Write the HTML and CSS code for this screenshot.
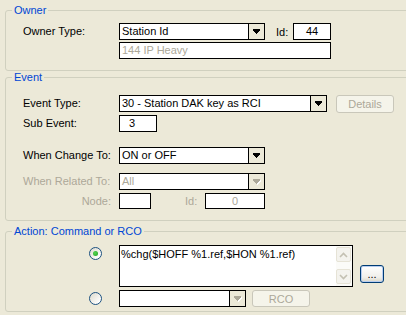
FILE: index.html
```html
<!DOCTYPE html>
<html lang="en">
<head>
    <meta charset="UTF-8">
    <title>Event Action</title>
    <link rel="stylesheet" href="styles.css">
</head>
<body>

<div class="window">
<div class="dialog">
    <fieldset class="group group-owner">
        <legend>Owner</legend>
        <div class="group-body owner-body">
            <div class="row">
                <span class="lbl">Owner Type:</span>
                <div class="combo w146">
                    <span class="combo-text">Station Id</span>
                    <span class="combo-btn"><svg width="7" height="5" viewBox="0 0 7 5" shape-rendering="crispEdges"><path d="M0 0h7v2h-1v1h-1v1h-1v1h-1v-1h-1v-1h-1v-1h-1z" fill="#000"/></svg></span>
                </div>
                <span class="side-lbl">Id:</span>
                <div class="field w38 center">44</div>
            </div>
            <div class="row gap2">
                <span class="lbl"></span>
                <div class="field w212 disabled">144 IP Heavy</div>
            </div>
        </div>
    </fieldset>

    <fieldset class="group group-event">
        <legend>Event</legend>
        <div class="group-body event-body">
            <div class="row">
                <span class="lbl">Event Type:</span>
                <div class="combo w208">
                    <span class="combo-text">30 - Station DAK key as RCI</span>
                    <span class="combo-btn"><svg width="7" height="5" viewBox="0 0 7 5" shape-rendering="crispEdges"><path d="M0 0h7v2h-1v1h-1v1h-1v1h-1v-1h-1v-1h-1v-1h-1z" fill="#000"/></svg></span>
                </div>
                <button class="btn btn-off details-btn">Details</button>
            </div>
            <div class="row gap3">
                <span class="lbl">Sub Event:</span>
                <div class="field w38 pad9">3</div>
            </div>
            <div class="row gap15">
                <span class="lbl">When Change To:</span>
                <div class="combo w146">
                    <span class="combo-text">ON or OFF</span>
                    <span class="combo-btn"><svg width="7" height="5" viewBox="0 0 7 5" shape-rendering="crispEdges"><path d="M0 0h7v2h-1v1h-1v1h-1v1h-1v-1h-1v-1h-1v-1h-1z" fill="#000"/></svg></span>
                </div>
            </div>
            <div class="row gap9">
                <span class="lbl off">When Related To:</span>
                <div class="combo w146">
                    <span class="combo-text off">All</span>
                    <span class="combo-btn"><svg width="8" height="6" viewBox="0 0 8 6" shape-rendering="crispEdges"><path d="M1 1h7v2h-1v1h-1v1h-1v1h-1v-1h-1v-1h-1v-1h-1z" fill="#fff"/><path d="M0 0h7v2h-1v1h-1v1h-1v1h-1v-1h-1v-1h-1v-1h-1z" fill="#ACA899"/></svg></span>
                </div>
            </div>
            <div class="row gap3 short">
                <span class="lbl off right">Node:</span>
                <div class="field w32"></div>
                <span class="side-lbl off node-id">Id:</span>
                <div class="field w60 center off">0</div>
            </div>
        </div>
    </fieldset>

    <fieldset class="group group-action">
        <legend>Action: Command or RCO</legend>
        <div class="group-body action-body">
            <div class="row tall">
                <span class="radio-cell top"><span class="radio checked"></span></span>
                <div class="memo">
                    <span class="memo-text">%chg($HOFF %1.ref,$HON %1.ref)</span>
                    <span class="memo-scroll">
                        <span class="sb-btn"><svg width="9" height="6" viewBox="0 0 9 6"><path d="M1 5l3.5-3.5 3.5 3.5" fill="none" stroke="#C4C1B3" stroke-width="1.6"/></svg></span>
                        <span class="sb-btn"><svg width="9" height="6" viewBox="0 0 9 6"><path d="M1 1l3.5 3.5 3.5-3.5" fill="none" stroke="#C4C1B3" stroke-width="1.6"/></svg></span>
                    </span>
                </div>
                <button class="btn btn-focus more-btn">...</button>
            </div>
            <div class="row gap3">
                <span class="radio-cell"><span class="radio"></span></span>
                <div class="combo w127">
                    <span class="combo-text"></span>
                    <span class="combo-btn"><svg width="8" height="6" viewBox="0 0 8 6" shape-rendering="crispEdges"><path d="M1 1h7v2h-1v1h-1v1h-1v1h-1v-1h-1v-1h-1v-1h-1z" fill="#fff"/><path d="M0 0h7v2h-1v1h-1v1h-1v1h-1v-1h-1v-1h-1v-1h-1z" fill="#ACA899"/></svg></span>
                </div>
                <button class="btn btn-off rco-btn">RCO</button>
            </div>
        </div>
    </fieldset>
</div>
</div>

</body>
</html>
```

FILE: styles.css
```css
body {
    margin: 0;
    background-color: #ECE9D8;
    font-family: "Liberation Sans", Arial, sans-serif;
    font-size: 11px;
    color: #000;
    overflow: hidden;
}
.window {
    width: 406px;
    height: 315px;
    overflow: hidden;
}
.dialog {
    padding-left: 5px;
    width: 440px;
}
.group {
    margin: 0;
    padding: 0;
    border: 1px solid #D0D0BF;
    border-radius: 3px;
    min-width: 0;
}
.group legend {
    margin-left: 6px;
    padding: 0 2px;
    line-height: 13px;
    color: #0046D5;
}
.group-owner {
    margin-top: 4px;
}
.group-action {
    margin-top: 4px;
}
.group-body {
    padding-left: 17px;
}
.owner-body {
    padding-top: 6px;
    padding-bottom: 11px;
}
.event-body {
    padding-top: 11px;
    padding-bottom: 11px;
}
.action-body {
    padding-top: 7px;
    padding-bottom: 4px;
}
.row {
    display: flex;
    align-items: center;
    height: 17px;
}
.row.short {
    height: 16px;
}
.row.tall {
    height: 42px;
    align-items: stretch;
}
.gap2 { margin-top: 2px; }
.gap3 { margin-top: 3px; }
.gap9 { margin-top: 9px; }
.gap15 { margin-top: 15px; }
.lbl {
    width: 96px;
    flex: none;
    line-height: 17px;
    white-space: nowrap;
}
.lbl.right {
    text-align: right;
    padding-right: 8px;
    box-sizing: border-box;
}
.off {
    color: #ACA899;
}
.side-lbl {
    width: 28px;
    flex: none;
    padding-left: 11px;
    box-sizing: border-box;
}
.side-lbl.node-id {
    width: 54px;
    padding-left: 34px;
}
.field {
    height: 100%;
    box-sizing: border-box;
    border: 1px solid #000;
    background-color: #fff;
    padding-left: 2px;
    line-height: 15px;
    flex: none;
}
.field.disabled {
    color: #ACA899;
}
.field.center {
    text-align: center;
    padding-left: 0;
}
.field.pad9 {
    padding-left: 9px;
}
.w32 { width: 32px; }
.w38 { width: 38px; }
.w60 { width: 60px; }
.w127 { width: 127px; }
.w146 { width: 146px; }
.w208 { width: 208px; }
.w212 { width: 212px; }
.combo {
    display: flex;
    height: 100%;
    box-sizing: border-box;
    border: 1px solid #000;
    background-color: #fff;
    flex: none;
}
.combo-text {
    flex: 1;
    padding-left: 2px;
    line-height: 15px;
    white-space: nowrap;
    overflow: hidden;
}
.combo-btn {
    width: 15px;
    border-left: 1px solid #000;
    background-color: #ECE9D8;
    display: flex;
    align-items: center;
    justify-content: center;
}
.btn {
    font-family: inherit;
    font-size: 11px;
    padding: 0;
    box-sizing: border-box;
    border-radius: 3px;
    flex: none;
}
.btn-off {
    border: 1px solid #C9C7BA;
    background-color: #F5F4EA;
    color: #ACA899;
}
.btn-focus {
    border: 1px solid #003C74;
    background: linear-gradient(#FFFFFF, #F0EFEA 70%, #D8D5C7);
    box-shadow: inset 0 0 0 1px #B8CDEF;
    color: #000;
}
.details-btn {
    width: 58px;
    height: 18px;
    margin-left: 9px;
}
.rco-btn {
    width: 58px;
    height: 17px;
    margin-left: 6px;
}
.more-btn {
    width: 24px;
    height: 18px;
    margin-left: 7px;
    align-self: flex-end;
    margin-bottom: 4px;
    line-height: 10px;
}
.radio-cell {
    width: 96px;
    flex: none;
    display: flex;
    align-items: center;
}
.radio-cell.top {
    align-items: flex-start;
    padding-top: 2px;
    box-sizing: border-box;
}
.radio {
    position: relative;
    width: 13px;
    height: 13px;
    margin-left: 66px;
    box-sizing: border-box;
    border: 1px solid #1C5180;
    border-radius: 50%;
    background: linear-gradient(135deg, #DCD9CB, #FFFFFF 85%);
}
.radio.checked::after {
    content: "";
    position: absolute;
    left: 3px;
    top: 3px;
    width: 5px;
    height: 5px;
    border-radius: 50%;
    background: radial-gradient(circle at 40% 40%, #55D451, #21A121);
}
.memo {
    width: 234px;
    box-sizing: border-box;
    border: 1px solid #000;
    background-color: #fff;
    display: flex;
    flex: none;
}
.memo-text {
    flex: 1;
    padding: 2px 1px;
    line-height: 13px;
    white-space: nowrap;
}
.memo-scroll {
    width: 16px;
    background-color: #FBFBF8;
    display: flex;
    flex-direction: column;
    justify-content: space-between;
    padding: 1px 0 2px;
    box-sizing: border-box;
}
.sb-btn {
    width: 15px;
    height: 15px;
    box-sizing: border-box;
    border: 1px solid #E6E3D6;
    border-radius: 2px;
    background-color: #F4F3EE;
    display: flex;
    align-items: center;
    justify-content: center;
}
```
